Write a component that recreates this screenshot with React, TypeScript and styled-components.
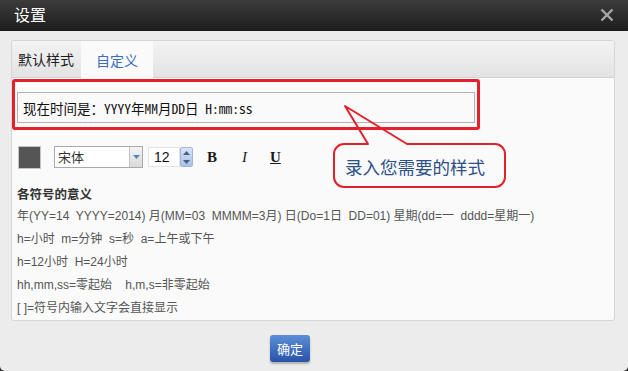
import React from "react";
import styled, { createGlobalStyle } from "styled-components";

const Global = createGlobalStyle`
  html, body { margin: 0; padding: 0; background: #2e2e2e; }
  body { font-family: "Liberation Sans", "Noto Sans CJK SC", sans-serif; }
  * { box-sizing: border-box; }
`;

const Dialog = styled.div`
  width: 628px;
  height: 371px;
  display: flex;
  flex-direction: column;
  background: #ececec;
  border-radius: 0 0 5px 5px;
  overflow: hidden;
`;

const Header = styled.div`
  height: 31px;
  flex: none;
  display: flex;
  align-items: center;
  justify-content: space-between;
  padding: 0 14px 0 14px;
  background: linear-gradient(#3c3c3c, #1d1d1d);
`;

const Title = styled.div`
  color: #fff;
  font-family: "Noto Sans CJK SC", sans-serif;
  font-size: 16px;
  line-height: 20px;
  margin-top: -3px;
`;

const Close = styled.div`
  width: 14px;
  height: 14px;
  display: flex;
  margin-top: -2px;
`;

const Body = styled.div`
  flex: 1;
  display: flex;
  flex-direction: column;
  padding: 9px 13px 0 11px;
`;

const Panel = styled.div`
  position: relative;
  height: 281px;
  border: 1px solid #d6d6d6;
  border-radius: 3px;
  background: #fafafa;
`;

const TabBar = styled.div`
  height: 37px;
  display: flex;
  background: linear-gradient(#f3f3f3, #e3e3e3);
  border-bottom: 1px solid #d2d2d2;
  border-radius: 3px 3px 0 0;
`;

const Tab = styled.div<{ $active?: boolean }>`
  height: ${(p) => (p.$active ? "37px" : "36px")};
  width: ${(p) => (p.$active ? "72px" : "69px")};
  padding-left: ${(p) => (p.$active ? "0" : "6px")};
  display: flex;
  align-items: center;
  justify-content: ${(p) => (p.$active ? "center" : "flex-start")};
  font-family: "Noto Sans CJK SC", sans-serif;
  font-size: 14px;
  color: ${(p) => (p.$active ? "#3a6cc2" : "#1e1e1e")};
  background: ${(p) => (p.$active ? "#fafafa" : "transparent")};
`;

const Content = styled.div`
  padding: 14px 5px 0 5px;
`;

const Input = styled.div`
  width: 458px;
  height: 31px;
  border: 1px solid #b2b2b2;
  background: #fafafa;
  display: flex;
  align-items: center;
  padding-left: 5px;
  font-family: "Noto Sans Mono CJK SC", "Liberation Mono", monospace;
  font-size: 13.5px;
  color: #111;
`;

const Toolbar = styled.div`
  margin-top: 22px;
  height: 24px;
  display: flex;
  align-items: center;
  padding-left: 1px;
`;

const Swatch = styled.div`
  width: 23px;
  height: 23px;
  background: #555555;
  border: 1px solid #c4c4c4;
  margin-right: 13px;
`;

const Select = styled.div`
  width: 89px;
  height: 22px;
  border: 1px solid #a9a9a9;
  background: #fff;
  display: flex;
  margin-right: 5px;
`;

const SelectText = styled.div`
  flex: 1;
  padding-left: 3px;
  font-family: "Noto Sans CJK SC", sans-serif;
  font-size: 13px;
  line-height: 20px;
  color: #333;
`;

const SelectArrow = styled.div`
  width: 13px;
  border-left: 1px solid #c2c2c2;
  background: linear-gradient(#f4f4f4, #d9d9d9);
  display: flex;
  align-items: center;
  justify-content: center;
`;

const NumberBox = styled.div`
  width: 32px;
  height: 20px;
  border: 1px solid #e4e4e4;
  background: #fff;
  font-family: "Liberation Sans", sans-serif;
  font-size: 14px;
  line-height: 18px;
  padding-left: 5px;
  color: #111;
`;

const Spinner = styled.div`
  width: 13px;
  height: 20px;
  border: 1px solid #9fb6de;
  border-radius: 2px;
  background: linear-gradient(#d9e4f6, #aac0e8);
  display: flex;
  flex-direction: column;
  align-items: center;
  justify-content: space-around;
  margin-right: 13px;
`;

const StyleBtn = styled.div<{ $w: number; $italic?: boolean; $underline?: boolean }>`
  width: ${(p) => p.$w}px;
  font-family: "Liberation Serif", serif;
  font-size: 15px;
  font-weight: ${(p) => (p.$italic ? "normal" : "bold")};
  font-style: ${(p) => (p.$italic ? "italic" : "normal")};
  text-decoration: ${(p) => (p.$underline ? "underline" : "none")};
  color: #1a1a1a;
  padding-left: 1px;
`;

const Legend = styled.div`
  margin-top: 13px;
  font-family: "Liberation Sans", "Noto Sans CJK SC", sans-serif;
  font-size: 12px;
  line-height: 23px;
  color: #555;
`;

const LegendTitle = styled.div`
  font-family: "Noto Sans CJK SC", sans-serif;
  font-weight: bold;
  font-size: 12.5px;
  color: #333;
`;

const Line = styled.div`
  white-space: pre;
`;

const Highlight = styled.div`
  position: absolute;
  left: 0;
  top: 38px;
  width: 468px;
  height: 51px;
  border: 3px solid #e3202b;
  border-radius: 3px;
  pointer-events: none;
`;

const Callout = styled.div`
  position: absolute;
  left: 320px;
  top: 60px;
  width: 190px;
  height: 130px;
  pointer-events: none;
`;

const CalloutShape = styled.svg`
  position: absolute;
  left: 0;
  top: 0;
`;

const CalloutText = styled.div`
  position: absolute;
  left: 13px;
  top: 45px;
  height: 40px;
  display: flex;
  align-items: center;
  font-family: "Noto Sans CJK SC", sans-serif;
  font-size: 17.5px;
  color: #2c4f88;
`;

const Footer = styled.div`
  display: flex;
  padding: 14px 0 0 259px;
`;

const OkButton = styled.div`
  width: 40px;
  height: 27px;
  border-radius: 3px;
  background: linear-gradient(#5c8fd8, #2753a8);
  box-shadow: 0 2px 2px rgba(0, 0, 0, 0.25);
  color: #fff;
  font-family: "Noto Sans CJK SC", sans-serif;
  font-size: 13px;
  display: flex;
  align-items: center;
  justify-content: center;
`;

const legendLines = [
  "年(YY=14  YYYY=2014) 月(MM=03  MMMM=3月) 日(Do=1日  DD=01) 星期(dd=一  dddd=星期一)",
  "h=小时  m=分钟  s=秒  a=上午或下午",
  "h=12小时  H=24小时",
  "hh,mm,ss=零起始    h,m,s=非零起始",
  "[ ]=符号内输入文字会直接显示",
];

export default function App() {
  return (
    <>
      <Global />
      <Dialog>
        <Header>
          <Title>设置</Title>
          <Close>
            <svg width="14" height="14" viewBox="0 0 14 14">
              <path d="M1.5 1.5 L12.5 12.5 M12.5 1.5 L1.5 12.5" stroke="#a8a8a8" strokeWidth="2.4" />
            </svg>
          </Close>
        </Header>
        <Body>
          <Panel>
            <TabBar>
              <Tab>默认样式</Tab>
              <Tab $active>自定义</Tab>
            </TabBar>
            <Content>
              <Input>现在时间是：YYYY年MM月DD日 H:mm:ss</Input>
              <Toolbar>
                <Swatch />
                <Select>
                  <SelectText>宋体</SelectText>
                  <SelectArrow>
                    <svg width="7" height="4" viewBox="0 0 7 4">
                      <path d="M0 0 H7 L3.5 4 Z" fill="#4f86c6" />
                    </svg>
                  </SelectArrow>
                </Select>
                <NumberBox>12</NumberBox>
                <Spinner>
                  <svg width="7" height="4" viewBox="0 0 7 4">
                    <path d="M0 4 H7 L3.5 0 Z" fill="#4d5f80" />
                  </svg>
                  <svg width="7" height="4" viewBox="0 0 7 4">
                    <path d="M0 0 H7 L3.5 4 Z" fill="#4d5f80" />
                  </svg>
                </Spinner>
                <StyleBtn $w={35}>B</StyleBtn>
                <StyleBtn $w={28} $italic>I</StyleBtn>
                <StyleBtn $w={20} $underline>U</StyleBtn>
              </Toolbar>
              <Legend>
                <LegendTitle>各符号的意义</LegendTitle>
                {legendLines.map((l) => (
                  <Line key={l}>{l}</Line>
                ))}
              </Legend>
            </Content>
            <Highlight />
            <Callout>
              <CalloutShape width="190" height="130" viewBox="0 0 190 130">
                <path
                  d="M36 43 L13 5 L75 43 H163 A10 10 0 0 1 173 53 V76 A10 10 0 0 1 163 86 H12 A10 10 0 0 1 2 76 V53 A10 10 0 0 1 12 43 Z"
                  fill="none"
                  stroke="#e3202b"
                  strokeWidth="2"
                  strokeLinejoin="round"
                />
              </CalloutShape>
              <CalloutText>录入您需要的样式</CalloutText>
            </Callout>
          </Panel>
          <Footer>
            <OkButton>确定</OkButton>
          </Footer>
        </Body>
      </Dialog>
    </>
  );
}
